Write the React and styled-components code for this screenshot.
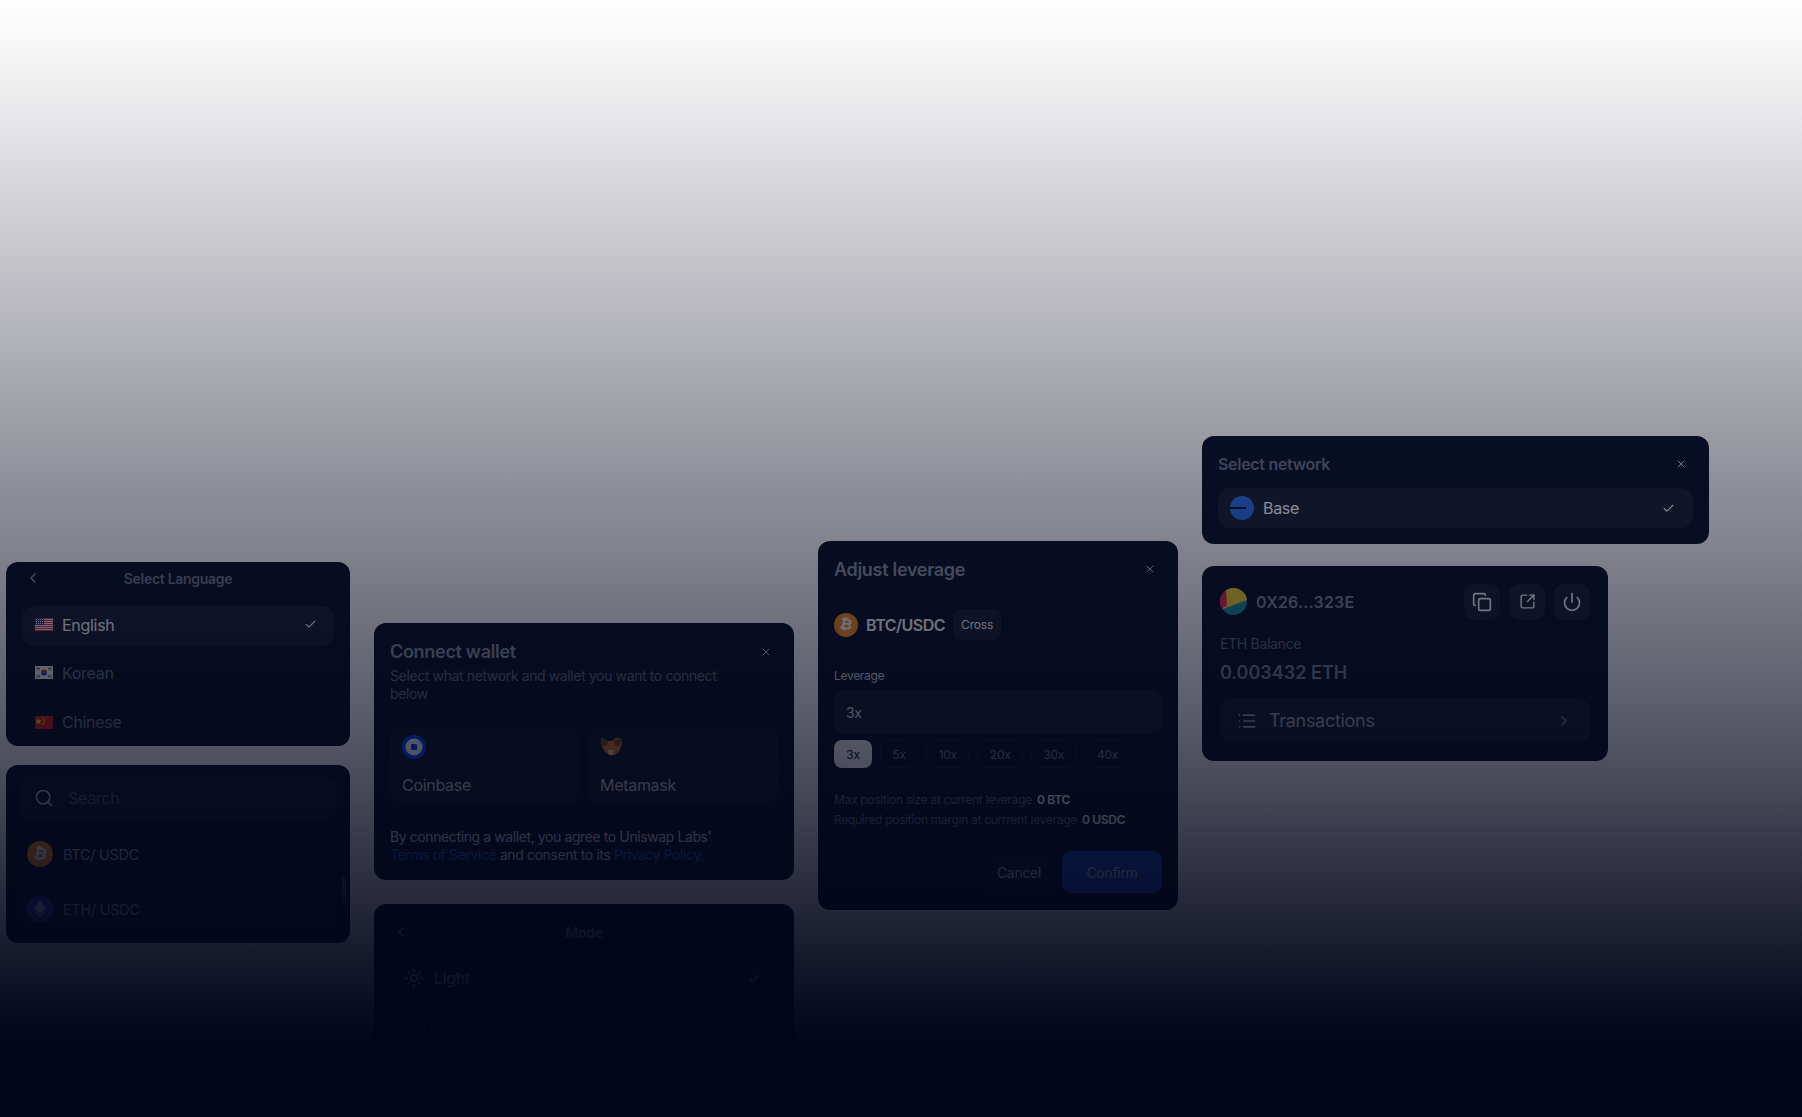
import React from "react";
import styled, { createGlobalStyle } from "styled-components";
import {
  Check,
  ChevronLeft,
  ChevronRight,
  Copy,
  List,
  Power,
  Search,
  SquareArrowOutUpRight,
  Sun,
  X,
} from "lucide-react";

const GlobalStyle = createGlobalStyle`
  * {
    box-sizing: border-box;
  }
  html, body {
    margin: 0;
    padding: 0;
    background: #fff;
    font-family: Inter, "Liberation Sans", sans-serif;
    letter-spacing: -0.3px;
  }
`;

const Page = styled.div`
  position: relative;
  width: 1802px;
  height: 1117px;
  overflow: hidden;
  background: #fff;
  display: flex;
  gap: 24px;
  padding-left: 6px;
`;

const Fade = styled.div`
  position: absolute;
  inset: 0;
  pointer-events: none;
  background: linear-gradient(
    180deg,
    rgba(2, 5, 26, 0) 0%,
    rgba(2, 5, 26, 0.09) 10%,
    rgba(2, 5, 26, 0.2) 20%,
    rgba(2, 5, 26, 0.3) 30%,
    rgba(2, 5, 26, 0.41) 40%,
    rgba(2, 5, 26, 0.51) 50%,
    rgba(2, 5, 26, 0.61) 60%,
    rgba(2, 5, 26, 0.72) 70%,
    rgba(2, 5, 26, 0.85) 80%,
    rgba(2, 5, 26, 0.97) 90%,
    rgba(2, 5, 26, 1) 94%,
    rgba(2, 5, 26, 1) 100%
  );
`;

const Column = styled.div`
  display: flex;
  flex-direction: column;
  align-items: flex-start;
  flex: none;
  width: ${(p) => p.$width}px;
  padding-top: ${(p) => p.$top}px;
  gap: ${(p) => p.$gap || 0}px;
`;

const Card = styled.div`
  width: ${(p) => p.$width || "100%"};
  height: ${(p) => p.$height}px;
  background: #0c1429;
  border-radius: 12px;
  padding: ${(p) => p.$padding || "16px"};
  color: #fff;
  overflow: hidden;
  flex: none;
  position: relative;
`;

const CenterHeader = styled.div`
  display: flex;
  align-items: center;
  justify-content: center;
  position: relative;
  height: 32px;
  margin-bottom: ${(p) => p.$mb || 12}px;
  margin-top: ${(p) => p.$mt || -16}px;
  font-size: 14px;
  font-weight: 600;
  color: #747a8e;
`;

const BackIcon = styled(ChevronLeft)`
  position: absolute;
  left: 3px;
  top: 8px;
  width: 16px;
  height: 16px;
  color: #9ba0b0;
`;

const TitleRow = styled.div`
  display: flex;
  align-items: center;
  justify-content: space-between;
  height: ${(p) => p.$height || 24}px;
  margin-bottom: ${(p) => p.$mb || 0}px;
`;

const Title = styled.div`
  font-size: ${(p) => p.$size || 18}px;
  font-weight: 600;
  color: ${(p) => p.$color || "#8f95a8"};
`;

const CloseIcon = styled(X)`
  width: 12px;
  height: 12px;
  color: #c7cad3;
  margin-right: ${(p) => p.$mr || 0}px;
`;

const Rows = styled.div`
  display: flex;
  flex-direction: column;
  gap: 8px;
`;

const Row = styled.div`
  display: flex;
  align-items: center;
  height: 40px;
  flex: none;
  padding: 0 12px ${(p) => p.$pb || 0}px ${(p) => p.$pl || 13}px;
  border-radius: 12px;
  font-size: 16px;
  gap: ${(p) => p.$gap || 9}px;
  background: ${(p) => (p.$active ? "#1c2337" : "transparent")};
  color: ${(p) => (p.$active ? "#ffffff" : "#6d7387")};
`;

const RowCheck = styled(Check)`
  margin-left: auto;
  margin-right: ${(p) => p.$mr || 5}px;
  width: 13px;
  height: 13px;
  color: #fff;
`;

const FlagBox = styled.svg`
  width: 18px;
  height: 13px;
  flex: none;
`;

const SearchBox = styled.div`
  display: flex;
  align-items: center;
  height: 42px;
  border-radius: 12px;
  background: #151c30;
  padding-left: 15px;
  gap: 14px;
  color: #b9bdc9;
  font-size: 16px;
  margin-bottom: 14px;
`;

const SearchHint = styled.span`
  color: #525a6e;
`;

const Pair = styled.div`
  display: flex;
  align-items: center;
  height: 42px;
  padding-left: 8px;
  gap: 10px;
  border-radius: 12px;
  font-size: 14.5px;
  color: #a3a7b5;
  background: ${(p) => (p.$active ? "#151c30" : "transparent")};
  margin-bottom: 13px;
`;

const Coin = styled.div`
  width: ${(p) => p.$size}px;
  height: ${(p) => p.$size}px;
  border-radius: 50%;
  flex: none;
  display: flex;
  align-items: center;
  justify-content: center;
  background: ${(p) => p.$bg};
  color: #fff;
  font-family: "DejaVu Sans", sans-serif;
  font-weight: 700;
  font-size: ${(p) => p.$size * 0.62}px;
`;

const BitcoinGlyph = styled.span`
  display: block;
  transform: rotate(12deg);
  line-height: 1;
`;

const ScrollThumb = styled.div`
  position: absolute;
  right: 4px;
  top: 112px;
  width: 4px;
  height: 26px;
  border-radius: 2px;
  background: #3c445a;
`;

const Subtext = styled.div`
  font-size: 14px;
  line-height: 18px;
  letter-spacing: -0.38px;
  width: 340px;
  color: #686e83;
  margin-top: 3px;
`;

const Wallets = styled.div`
  display: grid;
  grid-template-columns: 189px 190px;
  gap: 9px;
  margin-top: 24px;
`;

const Wallet = styled.div`
  height: 77px;
  border-radius: 12px;
  background: #151c30;
  padding: 8px 12px;
  display: flex;
  flex-direction: column;
  justify-content: space-between;
  font-size: 16px;
  color: #c6c9d2;
`;

const WalletName = styled.div`
  line-height: 20px;
  margin-bottom: 1px;
`;

const Terms = styled.div`
  font-size: 14px;
  line-height: 18px;
  letter-spacing: -0.4px;
  color: #d8dae1;
  margin-top: 24px;
`;

const TermsLink = styled.span`
  color: #1a5fd8;
`;

const PairHeading = styled.div`
  display: flex;
  align-items: center;
  gap: 8px;
  margin-top: 28px;
  font-size: 16px;
  font-weight: 600;
  letter-spacing: -0.5px;
  color: #fff;
`;

const Badge = styled.div`
  width: 48px;
  height: 31px;
  border-radius: 8px;
  background: #1c2337;
  font-size: 12px;
  font-weight: 400;
  letter-spacing: -0.2px;
  display: flex;
  align-items: center;
  justify-content: center;
`;

const FieldLabel = styled.div`
  font-size: 12px;
  line-height: 16px;
  color: #d2d5dc;
  margin-top: 28px;
`;

const Input = styled.div`
  display: flex;
  align-items: center;
  height: 44px;
  border-radius: 10px;
  background: #1a2135;
  padding-left: 12px;
  margin-top: 6px;
  font-size: 14px;
  color: #e2e4ea;
`;

const Chips = styled.div`
  display: flex;
  gap: 8px;
  margin-top: 6px;
`;

const Chip = styled.div`
  height: 28px;
  min-width: 38px;
  padding: 0 11.5px;
  border-radius: 8px;
  font-size: 12px;
  display: flex;
  align-items: center;
  justify-content: center;
  background: ${(p) => (p.$active ? "#fff" : "transparent")};
  color: ${(p) => (p.$active ? "#0c1429" : "#7a8094")};
  border: ${(p) => (p.$active ? "none" : "1px solid #1c2337")};
`;

const InfoLines = styled.div`
  margin-top: 24px;
  display: flex;
  flex-direction: column;
  gap: 4px;
`;

const Info = styled.div`
  font-size: 12px;
  line-height: 16px;
  color: #6a7085;
`;

const InfoValue = styled.span`
  color: #fff;
  font-weight: 600;
  margin-left: 5px;
`;

const Actions = styled.div`
  display: flex;
  justify-content: flex-end;
  gap: 9px;
  margin-top: 23px;
`;

const Action = styled.div`
  height: 42px;
  width: ${(p) => p.$width}px;
  border-radius: 10px;
  font-size: 14px;
  display: flex;
  align-items: center;
  justify-content: center;
  background: ${(p) => p.$bg};
  color: #c8cbd4;
`;

const WalletTop = styled.div`
  display: flex;
  align-items: center;
  height: 35px;
  gap: 9px;
`;

const Address = styled.div`
  font-size: 16px;
  font-weight: 600;
  color: #858a9b;
  letter-spacing: 0.2px;
`;

const IconButtons = styled.div`
  margin-left: auto;
  display: flex;
  gap: 9px;
`;

const IconButton = styled.div`
  width: 36px;
  height: 36px;
  border-radius: 10px;
  background: #1c2337;
  display: flex;
  align-items: center;
  justify-content: center;
  color: #fff;
`;

const BalanceLabel = styled.div`
  font-size: 14px;
  line-height: 18px;
  color: #656b80;
  margin-top: 16px;
`;

const BalanceValue = styled.div`
  font-size: 18px;
  line-height: 24px;
  font-weight: 600;
  letter-spacing: 0;
  color: #7d8395;
  margin-top: 8px;
`;

const TxRow = styled.div`
  display: flex;
  align-items: center;
  height: 44px;
  border-radius: 12px;
  background: #1a2135;
  margin-top: 14px;
  padding: 0 18px 1px 17px;
  gap: 12px;
  font-size: 18px;
  color: #a3a7b5;
`;

const TxChevron = styled(ChevronRight)`
  margin-left: auto;
  width: 16px;
  height: 16px;
  color: #7c8296;
`;

const UsFlag = () => (
  <FlagBox viewBox="0 0 18 13">
    <rect width="18" height="13" fill="#fff" />
    {[0, 2, 4, 6, 8, 10, 12].map((y) => (
      <rect key={y} y={y} width="18" height="1" fill="#d8313f" />
    ))}
    <rect width="9" height="7" fill="#3c3b8e" />
    {[1, 3, 5, 7].map((x) =>
      [1, 3, 5].map((y) => <rect key={`${x}-${y}`} x={x} y={y} width="1" height="1" fill="#fff" />)
    )}
  </FlagBox>
);

const KrFlag = () => (
  <FlagBox viewBox="0 0 18 13">
    <rect width="18" height="13" fill="#f2f2f2" />
    <path d="M6 6.5a3 3 0 0 1 6 0z" fill="#d8283c" />
    <path d="M6 6.5a3 3 0 0 0 6 0z" fill="#1f3f9e" />
    <path
      d="M1.5 3.5l2-2.500M3 4.500l2-2.500M13 2l2 2.500M14.500 1l2 2.500M1.500 9.500l2 2.500M3 8.500l2 2.500M13 11l2-2.500M14.500 12l2-2.500"
      stroke="#222"
      strokeWidth="0.9"
    />
  </FlagBox>
);

const CnFlag = () => (
  <FlagBox viewBox="0 0 18 13">
    <rect width="18" height="13" fill="#d3221c" />
    <polygon
      points="3.500,1.500 4.400,4.200 7,4.200 4.900,5.800 5.700,8.400 3.500,6.800 1.300,8.400 2.100,5.800 0.200,4.200 2.700,4.200"
      fill="#f6d90f"
    />
    <circle cx="8" cy="2" r="0.8" fill="#f6d90f" />
    <circle cx="9.200" cy="4" r="0.8" fill="#f6d90f" />
    <circle cx="9.200" cy="6.200" r="0.8" fill="#f6d90f" />
    <circle cx="8" cy="8" r="0.8" fill="#f6d90f" />
  </FlagBox>
);

const BtcCoin = ({ size }) => (
  <Coin $size={size} $bg="#f7931a">
    <BitcoinGlyph>₿</BitcoinGlyph>
  </Coin>
);

const EthCoin = () => (
  <Coin $size={26} $bg="#4a3aa8">
    <svg width="12" height="18" viewBox="0 0 12 18">
      <polygon points="6,0 12,9.200 6,12.400 0,9.200" fill="#b9b3e6" />
      <polygon points="6,13.700 12,10.500 6,18 0,10.500" fill="#8f86d8" />
    </svg>
  </Coin>
);

const CoinbaseLogo = () => (
  <svg width="24" height="24" viewBox="0 0 24 24">
    <circle cx="12" cy="12" r="12" fill="#0052ff" />
    <circle cx="12" cy="12" r="8.500" fill="#fff" />
    <rect x="9" y="9" width="6" height="6" rx="1" fill="#0052ff" />
  </svg>
);

const FoxLogo = () => (
  <svg width="24" height="24" viewBox="0 0 24 24">
    <polygon points="2,2 8,5 12,5 16,2 21,2 22,8 19,16 14,19 10,19 5,16 1,8" fill="#d9762b" transform="translate(0 1)" />
    <polygon points="1,3 8,6 7,11 2,11" fill="#7c4a26" />
    <polygon points="21,3 14,6 15,11 20,11" fill="#7c4a26" />
    <polygon points="8,15 14,15 13,20 9,20" fill="#f0c6a0" />
    <polygon points="9,20 13,20 12,22 10,22" fill="#28211c" />
  </svg>
);

const BaseLogo = () => (
  <svg width="24" height="24" viewBox="0 0 24 24">
    <circle cx="12" cy="12" r="12" fill="#2f6fe8" />
    <rect x="0" y="11" width="16" height="2" fill="#0c1429" />
  </svg>
);

const Avatar = () => (
  <svg width="27" height="27" viewBox="0 0 27 27">
    <circle cx="13.500" cy="13.500" r="13.500" fill="#1e8c9c" />
    <path d="M6 2.300A13.500 13.500 0 0 1 27 12L3 21z" fill="#f2cf2e" />
    <path d="M6 2.300A13.500 13.500 0 0 0 1.500 20L7 18z" fill="#e02d4d" />
  </svg>
);

export default function App() {
  return (
    <>
      <GlobalStyle />
      <Page>
        <Column $width={344} $top={562} $gap={19}>
          <Card $height={184}>
            <CenterHeader>
              <BackIcon />
              Select Language
            </CenterHeader>
            <Rows>
              <Row $active $pb={3}>
                <UsFlag />
                English
                <RowCheck />
              </Row>
              <Row $pb={3}>
                <KrFlag />
                Korean
              </Row>
              <Row>
                <CnFlag />
                Chinese
              </Row>
            </Rows>
          </Card>
          <Card $height={178} $padding="12px 13px">
            <SearchBox>
              <Search size={20} />
              <SearchHint>Search</SearchHint>
            </SearchBox>
            <Pair>
              <BtcCoin size={26} />
              BTC/ USDC
            </Pair>
            <Pair $active>
              <EthCoin />
              ETH/ USDC
            </Pair>
            <ScrollThumb />
          </Card>
        </Column>

        <Column $width={420} $top={623} $gap={24}>
          <Card $height={257}>
            <TitleRow $height={25}>
              <Title>Connect wallet</Title>
              <CloseIcon $mr={6} />
            </TitleRow>
            <Subtext>Select what network and wallet you want to connect below</Subtext>
            <Wallets>
              <Wallet>
                <CoinbaseLogo />
                <WalletName>Coinbase</WalletName>
              </Wallet>
              <Wallet>
                <FoxLogo />
                <WalletName>Metamask</WalletName>
              </Wallet>
            </Wallets>
            <Terms>
              By connecting a wallet, you agree to Uniswap Labs'
              <br />
              <TermsLink>Terms of Service</TermsLink> and consent to its{" "}
              <TermsLink>Privacy Policy.</TermsLink>
            </Terms>
          </Card>
          <Card $height={184}>
            <CenterHeader $mt={-4} $mb={10}>
              <BackIcon />
              Mode
            </CenterHeader>
            <Rows>
              <Row $active $pl={14} $gap={10}>
                <Sun size={20} />
                Light
                <RowCheck />
              </Row>
              <Row>Dark</Row>
            </Rows>
          </Card>
        </Column>

        <Column $width={360} $top={541}>
          <Card $height={369}>
            <TitleRow $height={24}>
              <Title>Adjust leverage</Title>
              <CloseIcon $mr={6} />
            </TitleRow>
            <PairHeading>
              <BtcCoin size={24} />
              BTC/USDC
              <Badge>Cross</Badge>
            </PairHeading>
            <FieldLabel>Leverage</FieldLabel>
            <Input>3x</Input>
            <Chips>
              <Chip $active>3x</Chip>
              <Chip>5x</Chip>
              <Chip>10x</Chip>
              <Chip>20x</Chip>
              <Chip>30x</Chip>
              <Chip>40x</Chip>
            </Chips>
            <InfoLines>
              <Info>
                Max position size at current leverage
                <InfoValue>0 BTC</InfoValue>
              </Info>
              <Info>
                Required position margin at currrent leverage
                <InfoValue>0 USDC</InfoValue>
              </Info>
            </InfoLines>
            <Actions>
              <Action $width={68} $bg="#151c30">Cancel</Action>
              <Action $width={100} $bg="#1a4ec0">Confirm</Action>
            </Actions>
          </Card>
        </Column>

        <Column $width={507} $top={436} $gap={22}>
          <Card $height={108}>
            <TitleRow $height={24} $mb={12}>
              <Title $size={16} $color="#6c7288">Select network</Title>
              <CloseIcon $mr={6} />
            </TitleRow>
            <Rows>
              <Row $active $pl={12} $gap={9}>
                <BaseLogo />
                Base
                <RowCheck $mr={6} />
              </Row>
            </Rows>
          </Card>
          <Card $width="406px" $height={195} $padding="18px">
            <WalletTop>
              <Avatar />
              <Address>0X26...323E</Address>
              <IconButtons>
                <IconButton>
                  <Copy size={20} />
                </IconButton>
                <IconButton>
                  <SquareArrowOutUpRight size={17} />
                </IconButton>
                <IconButton>
                  <Power size={20} />
                </IconButton>
              </IconButtons>
            </WalletTop>
            <BalanceLabel>ETH Balance</BalanceLabel>
            <BalanceValue>0.003432 ETH</BalanceValue>
            <TxRow>
              <List size={20} />
              Transactions
              <TxChevron />
            </TxRow>
          </Card>
        </Column>
        <Fade />
      </Page>
    </>
  );
}
